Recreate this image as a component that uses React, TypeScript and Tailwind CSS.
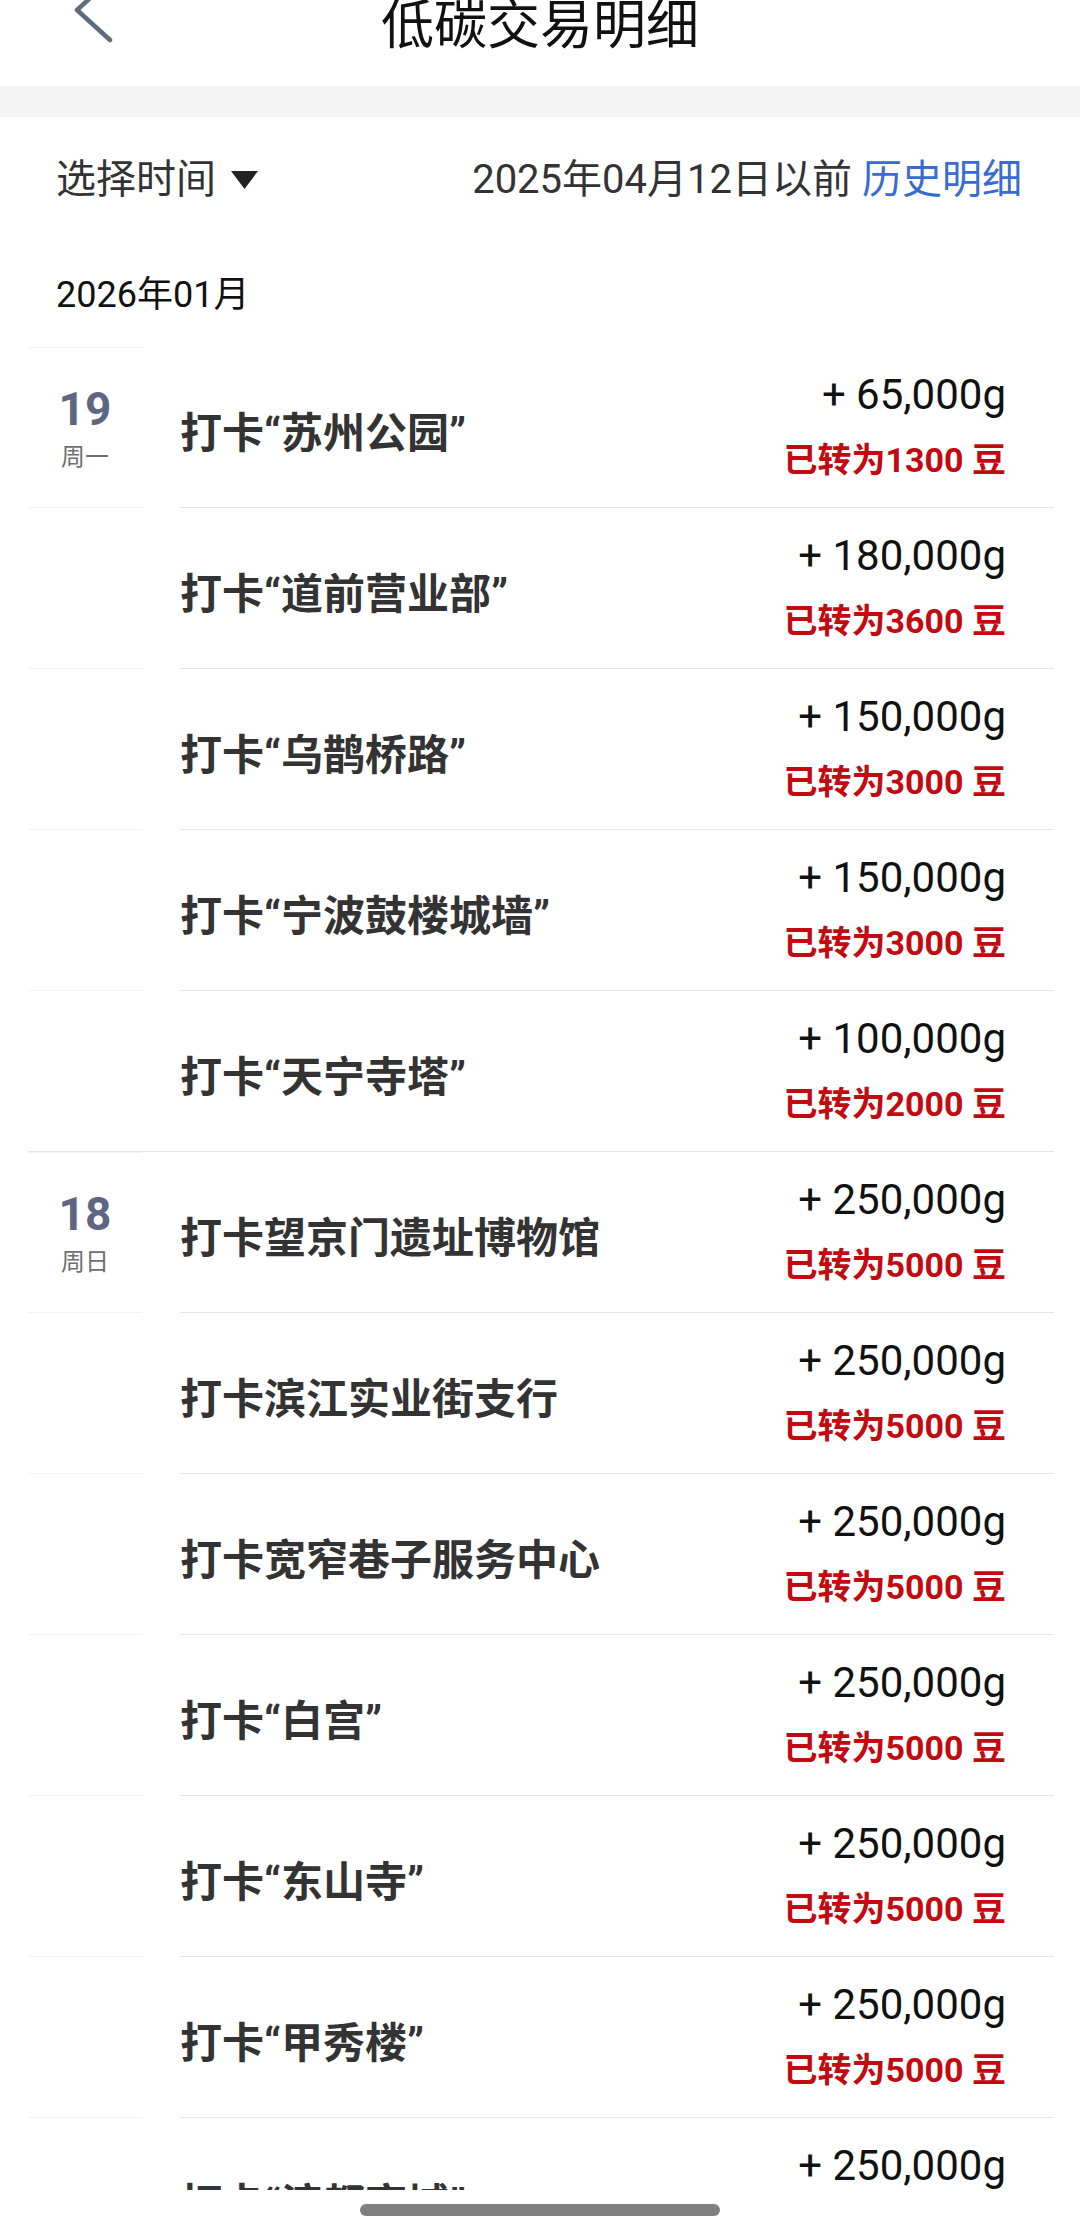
import React from "react";

interface Entry {
  title: string;
  amount: string;
  beans: string;
}

interface DayGroup {
  day: string;
  week: string;
  entries: Entry[];
}

const groups: DayGroup[] = [
  {
    day: "19",
    week: "周一",
    entries: [
      { title: "打卡“苏州公园”", amount: "+ 65,000g", beans: "1300" },
      { title: "打卡“道前营业部”", amount: "+ 180,000g", beans: "3600" },
      { title: "打卡“乌鹊桥路”", amount: "+ 150,000g", beans: "3000" },
      { title: "打卡“宁波鼓楼城墙”", amount: "+ 150,000g", beans: "3000" },
      { title: "打卡“天宁寺塔”", amount: "+ 100,000g", beans: "2000" },
    ],
  },
  {
    day: "18",
    week: "周日",
    entries: [
      { title: "打卡望京门遗址博物馆", amount: "+ 250,000g", beans: "5000" },
      { title: "打卡滨江实业街支行", amount: "+ 250,000g", beans: "5000" },
      { title: "打卡宽窄巷子服务中心", amount: "+ 250,000g", beans: "5000" },
      { title: "打卡“白宫”", amount: "+ 250,000g", beans: "5000" },
      { title: "打卡“东山寺”", amount: "+ 250,000g", beans: "5000" },
      { title: "打卡“甲秀楼”", amount: "+ 250,000g", beans: "5000" },
      { title: "打卡“滨都商城”", amount: "+ 250,000g", beans: "5000" },
    ],
  },
];

function Row({ entry, first, last, group }: { entry: Entry; first: boolean; last: boolean; group: DayGroup }) {
  return (
    <div className={`flex ${last ? "h-[160px]" : "h-[161px]"}`}>
      {/* 日期列 */}
      <div
        className={`w-[114px] flex flex-col items-center justify-center ${first ? "border-t border-[#f3f3f3]" : ""} ${last ? "" : "border-b border-[#f3f3f3]"}`}
      >
        {first && (
          <>
            <span className="text-[46px] leading-none font-bold text-[#5f6684]">{group.day}</span>
            <span className="mt-[13px] text-[24px] leading-none text-[#6f6f6f]">{group.week}</span>
          </>
        )}
      </div>

      {/* 内容 */}
      <div className={`ml-[38px] flex-1 flex items-center justify-between pr-[48px] ${last ? "" : "border-b border-[#e6e6e6]"}`}>
        <span className="mt-[14px] text-[42px] leading-none font-bold text-[#333333]">{entry.title}</span>
        <div className="flex flex-col items-end pb-[4px]">
          <span className="text-[42px] leading-[50px] text-[#111111] whitespace-pre">{entry.amount}</span>
          <span className="mt-[20px] text-[34px] leading-[41px] font-bold text-[#c20a10] whitespace-pre">
            已转为{entry.beans} 豆
          </span>
        </div>
      </div>
    </div>
  );
}

export default function App() {
  return (
    <div
      lang="zh-CN"
      className="w-[1080px] h-[2236px] bg-white flex flex-col overflow-hidden font-['Roboto','Noto_Sans_CJK_SC',sans-serif]"
    >
      {/* 顶栏 */}
      <div className="relative h-[86px] shrink-0 flex justify-center">
        <svg className="absolute left-[70px] top-[-25px]" width="50" height="70" viewBox="0 0 50 70">
          <polyline
            points="40,5 7,35 40,65"
            fill="none"
            stroke="#5d6d7c"
            strokeWidth="4.5"
            strokeLinecap="round"
            strokeLinejoin="round"
          />
        </svg>
        <span className="text-[53px] leading-none text-[#111111]">低碳交易明细</span>
      </div>

      <div className="h-[31px] shrink-0 bg-[#f4f4f4]" />

      {/* 筛选 */}
      <div className="h-[126px] shrink-0 flex items-center justify-between pl-[56px] pr-[58px] text-[40px] leading-none">
        <div className="flex items-center text-[#333333]">
          <span>选择时间</span>
          <svg className="ml-[15px]" width="27" height="18" viewBox="0 0 27 18">
            <polygon points="0,0 27,0 13.5,18" fill="#222222" />
          </svg>
        </div>
        <div className="flex items-center">
          <span className="text-[#333333]">2025年04月12日以前</span>
          <span className="ml-[10px] text-[#3a6bd2]">历史明细</span>
        </div>
      </div>

      <div className="h-[104px] shrink-0 pl-[56px] pt-[34px]">
        <span className="text-[36px] leading-none text-[#111111]">2026年01月</span>
      </div>

      {/* 列表 */}
      <div className="flex-1 min-h-0 overflow-hidden pl-[28px] pr-[26px]">
        {groups.map((g) => (
          <div key={g.day} className="border-b border-[#e6e6e6]">
            {g.entries.map((e, i) => (
              <Row key={i} entry={e} group={g} first={i === 0} last={i === g.entries.length - 1} />
            ))}
          </div>
        ))}
      </div>

      {/* 底部指示条 */}
      <div className="h-[46px] shrink-0 flex justify-center pt-[14px]">
        <div className="w-[360px] h-[12px] rounded-full bg-[#808080]" />
      </div>
    </div>
  );
}
